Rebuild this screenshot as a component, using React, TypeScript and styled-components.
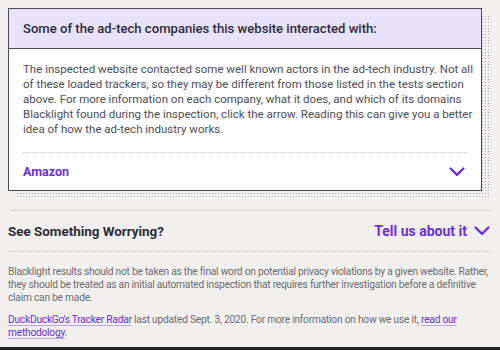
import React from "react";
import styled, { createGlobalStyle } from "styled-components";

const GlobalStyle = createGlobalStyle`
  html, body {
    margin: 0;
    padding: 0;
    background: #f1f0ee;
  }
  body {
    font-family: Roboto, "Noto Sans", sans-serif;
    -webkit-font-smoothing: antialiased;
  }
`;

const Page = styled.div`
  width: 500px;
  height: 350px;
  overflow: hidden;
  display: flex;
  flex-direction: column;
  background: #f1f0ee;
`;

const Content = styled.div`
  flex: 1;
  padding: 8px 10px 0 8px;
`;

const CardWrap = styled.div`
  position: relative;
  isolation: isolate;
  margin-right: 8px;

  &::before {
    content: "";
    position: absolute;
    top: 7px;
    left: 8px;
    right: -8px;
    bottom: -6px;
    z-index: -1;
    background-image: radial-gradient(#a9a9b2 0.7px, transparent 0.9px);
    background-size: 3px 3px;
  }
`;

const Card = styled.section`
  background: #fff;
  border: 1px solid #4b4b58;
`;

const CardHeader = styled.div`
  background: #e8e3fb;
  border-bottom: 1px solid #4b4b58;
  height: 39px;
  padding: 0 14px;
  display: flex;
  align-items: center;
  font-size: 13.1px;
  font-weight: 500;
  color: #2d2c3a;
`;

const CardBody = styled.div`
  padding: 13px 14px 0 14px;
`;

const Intro = styled.p`
  margin: 0;
  font-size: 11.5px;
  line-height: 15px;
  color: #4e4e58;
  white-space: nowrap;
  padding-bottom: 15px;
  border-bottom: 1px dotted #c8c8cc;
`;

const CompanyRow = styled.button`
  all: unset;
  box-sizing: border-box;
  width: 100%;
  height: 37px;
  display: flex;
  align-items: center;
  justify-content: space-between;
  font-family: Roboto, "Noto Sans", sans-serif;
  font-size: 12.5px;
  font-weight: 700;
  color: #6b2ee3;
  cursor: pointer;
  padding-right: 2px;
`;

const Section = styled.div`
  margin-top: 19px;
  border-top: 1px dotted #c6c6ca;
  margin-left: 2px;
`;

const WorryRow = styled.div`
  height: 40px;
  display: flex;
  align-items: center;
  justify-content: space-between;
  margin-left: -2px;
  border-bottom: 1px dotted #c6c6ca;
`;

const WorryTitle = styled.h3`
  margin: 0;
  font-size: 13.4px;
  font-weight: 700;
  color: #2d2c3a;
`;

const TellLink = styled.a`
  display: flex;
  align-items: center;
  gap: 7px;
  font-size: 14px;
  font-weight: 700;
  color: #6b2ee3;
  text-decoration: none;
  cursor: pointer;
`;

const Note = styled.p<{ $gap?: number }>`
  margin: ${(p) => p.$gap ?? 0}px 0 0 -2px;
  font-size: 10.2px;
  letter-spacing: -0.22px;
  line-height: 13px;
  color: #6c6c74;
  white-space: nowrap;
`;

const InlineLink = styled.a`
  color: #6b2ee3;
  text-decoration: underline;
  text-decoration-color: #b9a6f0;
  text-underline-offset: 2px;
`;

const Footer = styled.div`
  height: 3px;
  background: #1e1d24;
`;

const Chevron = ({ size = 16 }: { size?: number }) => (
  <svg width={size} height={size * 0.62} viewBox="0 0 16 10" fill="none">
    <polyline
      points="1.5,1.5 8,8 14.5,1.5"
      stroke="#6b2ee3"
      strokeWidth="2.3"
      strokeLinecap="round"
      strokeLinejoin="round"
    />
  </svg>
);

export default function App() {
  return (
    <Page>
      <GlobalStyle />
      <Content>
        <CardWrap>
          <Card>
            <CardHeader>Some of the ad-tech companies this website interacted with:</CardHeader>
            <CardBody>
              <Intro>
                The inspected website contacted some well known actors in the ad-tech industry. Not all
                <br />
                of these loaded trackers, so they may be different from those listed in the tests section
                <br />
                above. For more information on each company, what it does, and which of its domains
                <br />
                Blacklight found during the inspection, click the arrow. Reading this can give you a better
                <br />
                idea of how the ad-tech industry works.
              </Intro>
              <CompanyRow>
                <span>Amazon</span>
                <Chevron size={16} />
              </CompanyRow>
            </CardBody>
          </Card>
        </CardWrap>
        <Section>
          <WorryRow>
            <WorryTitle>See Something Worrying?</WorryTitle>
            <TellLink>
              Tell us about it
              <Chevron size={16} />
            </TellLink>
          </WorryRow>
          <Note $gap={13}>
            Blacklight results should not be taken as the final word on potential privacy violations by a given website. Rather,
            <br />
            they should be treated as an initial automated inspection that requires further investigation before a definitive
            <br />
            claim can be made.
          </Note>
          <Note $gap={9}>
            <InlineLink>DuckDuckGo's Tracker Radar</InlineLink> last updated Sept. 3, 2020. For more information on how we use it,{" "}
            <InlineLink>read our</InlineLink>
            <br />
            <InlineLink>methodology</InlineLink>.
          </Note>
        </Section>
      </Content>
      <Footer />
    </Page>
  );
}
